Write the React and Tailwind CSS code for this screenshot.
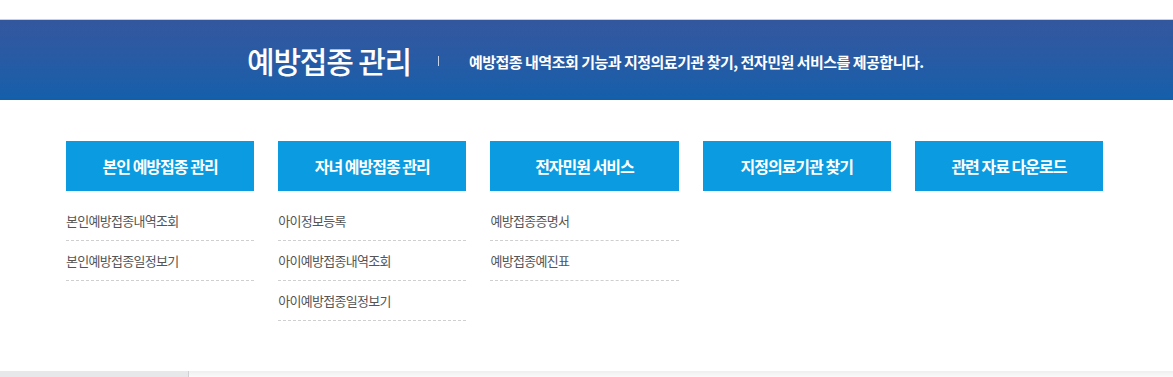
import React from "react";

const font = { fontFamily: '"Noto Sans CJK KR", "Noto Sans", sans-serif' };

const columns = [
  { title: "본인 예방접종 관리", items: ["본인예방접종내역조회", "본인예방접종일정보기"] },
  { title: "자녀 예방접종 관리", items: ["아이정보등록", "아이예방접종내역조회", "아이예방접종일정보기"] },
  { title: "전자민원 서비스", items: ["예방접종증명서", "예방접종예진표"] },
  { title: "지정의료기관 찾기", items: [] },
  { title: "관련 자료 다운로드", items: [] },
];

export default function App() {
  return (
    <div className="w-[1173px] h-[377px] bg-white overflow-hidden relative" style={font}>
      <div className="h-[20px] bg-white border-b border-[#c9cfdc]" />
      <div className="h-[80px] bg-gradient-to-b from-[#33579f] to-[#135faa] flex items-center">
        <h1 className="ml-[247px] text-[30px] font-medium text-white tracking-[-1.2px] leading-none">
          예방접종 관리
        </h1>
        <span className="ml-[27px] w-px h-[10px] bg-[#c8d3e8] mt-[2px]" />
        <p className="ml-[30px] text-[15px] font-bold text-white tracking-[-0.5px] leading-none mt-[3px]">
          예방접종 내역조회 기능과 지정의료기관 찾기, 전자민원 서비스를 제공합니다.
        </p>
      </div>
      <div className="ml-[66px] mt-[41px] w-[1037px] grid grid-cols-5 gap-x-[24px]">
        {columns.map((c) => (
          <div key={c.title} className="flex flex-col">
            <div className="h-[50px] bg-[#0a9be0] flex items-center justify-center text-white text-[16px] font-bold tracking-[-1px]">
              {c.title}
            </div>
            <ul className="mt-[10px]">
              {c.items.map((it) => (
                <li
                  key={it}
                  className="h-[40px] flex items-center border-b border-dashed border-[#cfcfcf] text-[13px] text-[#555] tracking-[-0.7px]"
                >
                  {it}
                </li>
              ))}
            </ul>
          </div>
        ))}
      </div>
      <div className="absolute left-0 right-0 top-[371px] h-[6px] flex">
        <div className="w-[189px] bg-[#e7e8ea] border-r border-[#cfd0d2]" />
        <div className="flex-1 bg-gradient-to-b from-[#efefef] to-[#fafafa]" />
      </div>
    </div>
  );
}
